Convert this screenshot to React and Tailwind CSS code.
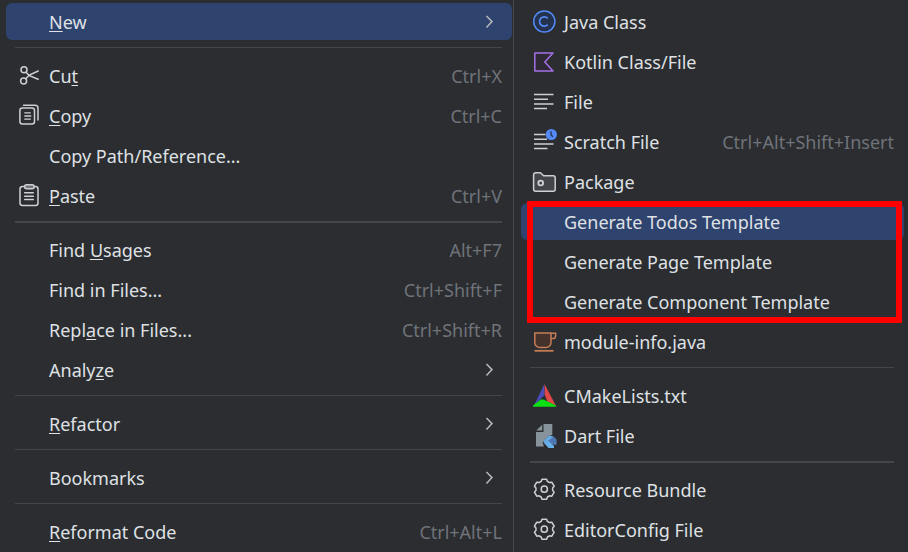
import React from "react";

const LIGHT = "#ced0d6";

function Icon({ children }) {
  return (
    <svg
      viewBox="0 0 24 24"
      fill="none"
      strokeWidth="1.5"
      aria-hidden="true"
      className="size-6 overflow-visible"
    >
      {children}
    </svg>
  );
}

const CutIcon = () => (
  <Icon>
    <g stroke={LIGHT} strokeLinecap="round">
      <circle cx="7" cy="5.8" r="3" />
      <circle cx="6.6" cy="17" r="3" />
      <path d="M9 8.2 12.3 11.6 21.2 15.3M8.8 14.8 12.3 11 21.2 7" />
    </g>
  </Icon>
);

const CopyIcon = () => (
  <Icon>
    <g stroke={LIGHT} strokeLinecap="round">
      <rect x="2.9" y="4" width="14.6" height="16" rx="2.5" />
      <path d="M6.5 1.2H18a3 3 0 0 1 3 3V16" />
      <path d="M7.8 8.8h5.5M7.8 12h6M7.8 15.2h5.5" strokeWidth="1.3" />
    </g>
  </Icon>
);

const PasteIcon = () => (
  <Icon>
    <g stroke={LIGHT} strokeLinecap="round">
      <rect x="3" y="2.6" width="18" height="19" rx="2.5" />
      <rect x="7.6" y="0.7" width="9.6" height="4" rx="2" fill="#6f737a" />
      <path d="M7.7 8.8h8.6M7.7 12.2h8.6M7.7 15.6h8.6" />
    </g>
  </Icon>
);

const ClassIcon = () => (
  <Icon>
    <circle cx="12.3" cy="11.5" r="10.6" fill="#25324d" stroke="#548af7" />
    <path d="M15.7 8.3a4.7 4.7 0 1 0 0 6.4" stroke="#548af7" strokeWidth="1.7" />
  </Icon>
);

const KotlinIcon = () => (
  <Icon>
    <path d="M2.8 3H21L12.8 12 21 21H2.8Z" fill="#2f2936" stroke="#a571e6" strokeLinejoin="round" />
  </Icon>
);

const FileIcon = () => (
  <Icon>
    <path d="M2 4.5h19.5M2 9.2h14M2 13.9h19.5M2 18.6h13" stroke={LIGHT} />
  </Icon>
);

const ScratchIcon = () => (
  <Icon>
    <path d="M2 4.5h11.5M2 9.2h13M2 13.9h19.5M2 18.6h13.5" stroke={LIGHT} />
    <circle cx="19.3" cy="4.5" r="5.6" fill="#548af7" />
    <path d="M19 1.2v3.6l1.8 2" stroke="#25324d" strokeWidth="1.3" />
  </Icon>
);

const PackageIcon = () => (
  <Icon>
    <path
      d="M1.6 4.8a2 2 0 0 1 2-2h4.8l3.2 3h9.6a2 2 0 0 1 2 2v11.4a2 2 0 0 1-2 2H3.6a2 2 0 0 1-2-2Z"
      fill="#43454a"
      stroke={LIGHT}
    />
    <circle cx="8.7" cy="13" r="2.4" stroke={LIGHT} strokeWidth="1.8" />
  </Icon>
);

const CupIcon = () => (
  <Icon>
    <g stroke="#c77d55">
      <path d="M2.8 3H19v9.5a5 5 0 0 1-5 5H7.8a5 5 0 0 1-5-5Z" fill="#45322b" />
      <path d="M19 3.2h4.6V6a2.6 2.6 0 0 1-2.6 2.6h-2" />
      <path d="M2.5 20.8h19" strokeWidth="1.8" />
    </g>
  </Icon>
);

const CMakeIcon = () => (
  <Icon>
    <path d="M12.3 0 12.6 11 2 21.6Z" fill="#4a4cb8" />
    <path d="M12.5 0 23.8 21.6 15.4 17.4 12.8 11Z" fill="#e04848" />
    <path d="M8.8 15.5h2.6l12.6 6v1.3H1v-1.2Z" fill="#0cdf12" />
  </Icon>
);

const DartIcon = () => (
  <Icon>
    <path d="M11.5 0h8.8v11l-3.5.4L10.5 18l1.4 4.5H4V8h7.5Z" fill="#87939a" />
    <path d="M10.2 0.8v5.8H4.3Z" fill="#87939a" />
    <path d="M12 16.5 17 12h4l3.6 3.5v5.3H21L15.5 18Z" fill="#4f78b3" />
    <path d="M17.4 11 21 13l-4.5 3.5L13 20l-2-2.600Z" fill="#68a9e0" />
    <path d="M12.500 19.500 16 16.800 22 22v2h-5.500Z" fill="#68b1ea" />
  </Icon>
);

const gearPoints = [0, 60, 120, 180, 240, 300]
  .flatMap((a) => [
    [a - 13, 10.3],
    [a + 13, 10.3],
    [a + 22, 8.4],
    [a + 38, 8.4],
  ])
  .map(([deg, r]) => {
    const t = ((deg - 90) * Math.PI) / 180;
    return `${(12.3 + r * Math.cos(t)).toFixed(2)},${(11.2 + r * Math.sin(t)).toFixed(2)}`;
  })
  .join(" ");

const GearIcon = () => (
  <Icon>
    <polygon points={gearPoints} stroke={LIGHT} strokeLinejoin="round" />
    <circle cx="12.3" cy="11.2" r="3.1" stroke={LIGHT} />
  </Icon>
);

const ChevronIcon = () => (
  <Icon>
    <path d="M8.5 6 14 11.6 8.5 17.5" stroke="#b4b8bf" />
  </Icon>
);

// An underscore in a label marks the mnemonic letter that follows it.
function Label({ text }) {
  const i = text.indexOf("_");
  if (i < 0) return <span>{text}</span>;
  return (
    <span>
      {text.slice(0, i)}
      <span className="underline decoration-1 underline-offset-2">{text[i + 1]}</span>
      {text.slice(i + 2)}
    </span>
  );
}

function Item({ icon: Glyph, text, shortcut, submenu, active }) {
  return (
    <li role="none" className="h-10 pt-px">
      <button
        type="button"
        role="menuitem"
        aria-haspopup={submenu ? "menu" : undefined}
        className={`flex h-[37px] w-full items-start gap-2 rounded-md pt-[7px] pr-2.5 pl-[11px] text-left whitespace-nowrap ${
          active ? "bg-[#2e436e]" : ""
        }`}
      >
        <span className="size-6 shrink-0">{Glyph && <Glyph />}</span>
        <Label text={text} />
        {shortcut && <span className="ml-auto text-[#6f737a]">{shortcut}</span>}
        {submenu && (
          <span className="ml-auto">
            <ChevronIcon />
          </span>
        )}
      </button>
    </li>
  );
}

function Separator({ thick }) {
  return (
    <li role="separator" className="h-3.5 pt-[5px] pr-2.5 pl-[9px]">
      <div className={`bg-[#43454a] ${thick ? "h-0.5" : "h-px"}`} />
    </li>
  );
}

export default function App() {
  return (
    <main className="grid min-h-screen grid-cols-[513fr_395fr] bg-[#2b2d30] font-['Noto_Sans',sans-serif] text-[18px] leading-6 text-[#dfe1e5]">
      <ul role="menu" aria-label="Context menu" className="min-w-0 pt-0.5 pr-px pl-1.5">
        <Item text="_New" submenu active />
        <Separator />
        <Item icon={CutIcon} text="Cu_t" shortcut="Ctrl+X" />
        <Item icon={CopyIcon} text="_Copy" shortcut="Ctrl+C" />
        <Item text="Copy Path/Reference..." />
        <Item icon={PasteIcon} text="_Paste" shortcut="Ctrl+V" />
        <Separator thick />
        <Item text="Find _Usages" shortcut="Alt+F7" />
        <Item text="Find in Files..." shortcut="Ctrl+Shift+F" />
        <Item text="Repl_ace in Files..." shortcut="Ctrl+Shift+R" />
        <Item text="Analy_ze" submenu />
        <Separator />
        <Item text="_Refactor" submenu />
        <Separator />
        <Item text="Bookmarks" submenu />
        <Separator />
        <Item text="_Reformat Code" shortcut="Ctrl+Alt+L" />
      </ul>

      <ul role="menu" aria-label="New" className="min-w-0 border-l border-[#43454a] pt-0.5 pr-1 pl-[7px]">
        <Item icon={ClassIcon} text="Java Class" />
        <Item icon={KotlinIcon} text="Kotlin Class/File" />
        <Item icon={FileIcon} text="File" />
        <Item icon={ScratchIcon} text="Scratch File" shortcut="Ctrl+Alt+Shift+Insert" />
        <Item icon={PackageIcon} text="Package" />
        <li role="none" className="relative">
          <ul role="group" aria-label="Templates">
            <Item text="Generate Todos Template" active />
            <Item text="Generate Page Template" />
            <Item text="Generate Component Template" />
          </ul>
          <div className="pointer-events-none absolute -top-px right-0.5 -bottom-px left-1.5 border-6 border-[#ff0000]" />
        </li>
        <Item icon={CupIcon} text="module-info.java" />
        <Separator />
        <Item icon={CMakeIcon} text="CMakeLists.txt" />
        <Item icon={DartIcon} text="Dart File" />
        <Separator thick />
        <Item icon={GearIcon} text="Resource Bundle" />
        <Item icon={GearIcon} text="EditorConfig File" />
      </ul>
    </main>
  );
}
